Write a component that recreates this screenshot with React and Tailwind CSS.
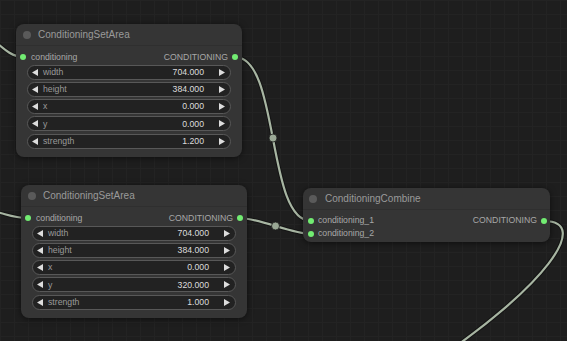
import React from 'react';

const font = { fontFamily: '"Liberation Sans", Arial, sans-serif' };

const WIRE = '#a7b5a2';

const ArrowLeft = () => (
  <svg width="6" height="7" viewBox="0 0 6 7" className="shrink-0">
    <polygon points="6,0 6,7 0,3.5" fill="#dddddd" />
  </svg>
);

const ArrowRight = () => (
  <svg width="6" height="7" viewBox="0 0 6 7" className="shrink-0">
    <polygon points="0,0 0,7 6,3.5" fill="#dddddd" />
  </svg>
);

const Widget = ({ label, value }) => (
  <div className="flex items-center h-[15px] rounded-full bg-[#222222] border border-[#585858] pl-[4px] pr-[5px]">
    <ArrowLeft />
    <span className="ml-[5px] text-[8.7px] text-[#9a9a9a] leading-none">{label}</span>
    <span className="ml-auto mr-[15px] text-[8.7px] text-[#dddddd] leading-none">{value}</span>
    <ArrowRight />
  </div>
);

const Dot = () => <div className="w-[6px] h-[6px] rounded-full bg-[#72ec72] shrink-0" />;

const SetAreaNode = ({ className, widgets }) => (
  <div className={`absolute w-[226px] rounded-[8px] bg-[#353535] shadow-[0_1px_6px_rgba(0,0,0,0.55)] ${className}`}>
    <div className="flex items-center h-[22px] pl-[7px] gap-[7px] border-b border-[#2f2f2f]">
      <div className="w-[8px] h-[8px] rounded-full bg-[#5a5a5a]" />
      <span className="text-[10px] text-[#9a9a9a] leading-none">ConditioningSetArea</span>
    </div>
    <div className="flex items-center justify-between h-[14px] mt-[4px] px-[4px]">
      <div className="flex items-center gap-[5px]">
        <Dot />
        <span className="text-[8.7px] text-[#a8a8a8] leading-none">conditioning</span>
      </div>
      <div className="flex items-center gap-[4px]">
        <span className="text-[8.7px] text-[#a8a8a8] leading-none">CONDITIONING</span>
        <Dot />
      </div>
    </div>
    <div className="flex flex-col gap-[2.3px] px-[11px] pt-[0.5px] pb-[8px]">
      {widgets.map((w) => (
        <Widget key={w[0]} label={w[0]} value={w[1]} />
      ))}
    </div>
  </div>
);

const App = () => {
  return (
    <div
      style={font}
      className="relative w-[567px] h-[341px] overflow-hidden bg-[#1e1e1e] [background-image:linear-gradient(to_right,#232323_1px,transparent_1px),linear-gradient(to_bottom,#232323_1px,transparent_1px)] [background-size:14px_14px]"
    >
      {/* links */}
      <svg className="absolute inset-0" width="567" height="341" viewBox="0 0 567 341" fill="none">
        {[
          'M-40,24 C-10,26 2,57 23,57',
          'M-20,209 C4,212 10,218 27,218',
          'M235,57 C280,57 266,221 311,221',
          'M240,218 C258,218 293,234 311,234',
          'M544,221 C592,221 546,287 430,364',
        ].map((d) => (
          <g key={d}>
            <path d={d} stroke="#141414" strokeWidth="4.2" strokeLinecap="round" />
            <path d={d} stroke={WIRE} strokeWidth="2.2" strokeLinecap="round" />
          </g>
        ))}
        <circle cx="273" cy="138" r="4" fill="#9aa895" stroke="#1a1a1a" strokeWidth="0.8" />
        <circle cx="275.5" cy="226" r="4" fill="#9aa895" stroke="#1a1a1a" strokeWidth="0.8" />
      </svg>

      <SetAreaNode
        className="left-[16px] top-[24px]"
        widgets={[
          ['width', '704.000'],
          ['height', '384.000'],
          ['x', '0.000'],
          ['y', '0.000'],
          ['strength', '1.200'],
        ]}
      />

      <SetAreaNode
        className="left-[21px] top-[185px]"
        widgets={[
          ['width', '704.000'],
          ['height', '384.000'],
          ['x', '0.000'],
          ['y', '320.000'],
          ['strength', '1.000'],
        ]}
      />

      {/* ConditioningCombine */}
      <div className="absolute left-[303px] top-[188px] w-[247px] h-[54px] rounded-[8px] bg-[#353535] shadow-[0_1px_6px_rgba(0,0,0,0.55)]">
        <div className="flex items-center h-[22px] pl-[6px] gap-[8px] border-b border-[#2f2f2f]">
          <div className="w-[8px] h-[8px] rounded-full bg-[#5a5a5a]" />
          <span className="text-[10px] text-[#9a9a9a] leading-none">ConditioningCombine</span>
        </div>
        <div className="flex justify-between pt-[4px] pl-[5px] pr-[3px]">
          <div className="flex flex-col">
            <div className="flex items-center gap-[4px] h-[13px]">
              <Dot />
              <span className="text-[8.7px] text-[#a8a8a8] leading-none">conditioning_1</span>
            </div>
            <div className="flex items-center gap-[4px] h-[13px]">
              <Dot />
              <span className="text-[8.7px] text-[#a8a8a8] leading-none">conditioning_2</span>
            </div>
          </div>
          <div className="flex items-center gap-[4px] h-[13px]">
            <span className="text-[8.7px] text-[#a8a8a8] leading-none">CONDITIONING</span>
            <Dot />
          </div>
        </div>
      </div>
    </div>
  );
};

export default App;
